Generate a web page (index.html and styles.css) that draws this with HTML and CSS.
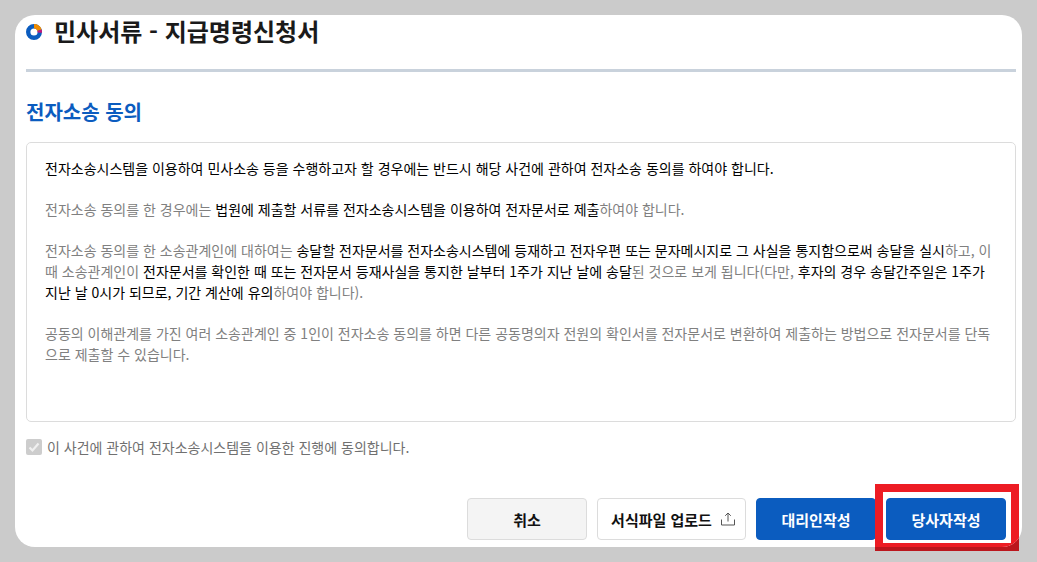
FILE: index.html
```html
<!DOCTYPE html>
<html lang="ko">
<head>
<meta charset="utf-8">
<title>민사서류 - 지급명령신청서</title>
<link rel="stylesheet" href="styles.css">
</head>
<body>
<div class="mark-under"></div>
<main class="card">
  <header class="head">
    <svg class="logo" viewBox="0 0 16 16" width="16" height="16" aria-hidden="true">
      <circle cx="8" cy="8" r="5.8" fill="none" stroke="#0b5cbf" stroke-width="4.4"/>
      <path d="M8 2.2A5.8 5.8 0 0 1 13.5 6.2" fill="none" stroke="#f08c00" stroke-width="4.4"/>
      <path d="M13.5 6.2A5.8 5.8 0 0 1 13.8 8.6" fill="none" stroke="#c2187a" stroke-width="4.4"/>
    </svg>
    <h1 class="title">민사서류 - 지급명령신청서</h1>
  </header>
  <hr class="rule">
  <h2 class="section">전자소송 동의</h2>
  <section class="terms">
    <p class="dark">전자소송시스템을 이용하여 민사소송 등을 수행하고자 할 경우에는 반드시 해당 사건에 관하여 전자소송 동의를 하여야 합니다.</p>
    <p>전자소송 동의를 한 경우에는 <b>법원에 제출할 서류를 전자소송시스템을 이용하여 전자문서로 제출</b>하여야 합니다.</p>
    <p>전자소송 동의를 한 소송관계인에 대하여는 <b>송달할 전자문서를 전자소송시스템에 등재하고 전자우편 또는 문자메시지로 그 사실을 통지함으로써 송달을 실시</b>하고, 이때 소송관계인이 <b>전자문서를 확인한 때 또는 전자문서 등재사실을 통지한 날부터 1주가 지난 날에 송달</b>된 것으로 보게 됩니다(다만, <b>후자의 경우 송달간주일은 1주가 지난 날 0시가 되므로, 기간 계산에 유의</b>하여야 합니다).</p>
    <p>공동의 이해관계를 가진 여러 소송관계인 중 1인이 전자소송 동의를 하면 다른 공동명의자 전원의 확인서를 전자문서로 변환하여 제출하는 방법으로 전자문서를 단독으로 제출할 수 있습니다.</p>
  </section>
  <label class="agree">
    <span class="check"><svg viewBox="0 0 16 16" width="16" height="16" aria-hidden="true"><path d="M3.5 8.5l3 3 6-7" fill="none" stroke="#f0f0f0" stroke-width="2.2"/></svg></span>
    <span>이 사건에 관하여 전자소송시스템을 이용한 진행에 동의합니다.</span>
  </label>
  <footer class="actions">
    <button class="btn btn-gray">취소</button>
    <button class="btn btn-line">서식파일 업로드
      <svg viewBox="0 0 16 16" width="16" height="16" aria-hidden="true"><path d="M8 10.5V2M5.2 4.8L8 2l2.8 2.8M1.5 8.5v5.5h13V8.5" fill="none" stroke="#555" stroke-width="1"/></svg>
    </button>
    <button class="btn btn-blue">대리인작성</button>
    <button class="btn btn-blue btn-mark">당사자작성</button>
  </footer>
  <div class="mark-over"></div>
</main>
</body>
</html>
```
FILE: styles.css
```css
* { box-sizing: border-box; }
html, body { margin: 0; height: 100%; }
body {
  background: #cbcbcb;
  padding: 15px;
  font-family: "Noto Sans CJK KR", "Noto Sans", sans-serif;
  overflow: hidden;
  position: relative;
}
.card {
  width: 1007px;
  height: 532px;
  background: #fff;
  border-radius: 20px;
  padding: 0 6px 0 11px;
  display: flex;
  flex-direction: column;
  position: relative;
  overflow: hidden;
}
.head { display: flex; align-items: center; gap: 12px; height: 34px; flex: none; }
.logo { flex: none; }
.title { margin: -2px 0 0; font-size: 24px; font-weight: 700; line-height: 30px; color: #1a1a1a; }
.rule { margin: 20px 0 0; border: 0; height: 3px; background: #c9d2dc; flex: none; }
.section { margin: 27px 0 0; font-size: 20px; line-height: 26px; font-weight: 700; color: #0b5cbf; }
.terms {
  margin-top: 17px;
  height: 280px;
  flex: none;
  border: 1px solid #dcdcdc;
  border-radius: 5px;
  padding: 15px 18px;
  font-size: 14px;
  line-height: 21px;
  color: #808080;
}
.terms p { margin: 0 0 20px; }
.terms b, .dark { font-weight: 400; color: #000; }
.agree { display: flex; align-items: center; gap: 5px; margin-top: 15px; font-size: 14px; line-height: 20px; color: #707070; }
.check { width: 16px; height: 16px; border-radius: 2px; background: #cdcdcd; display: block; }
.check svg { display: block; }
.actions { position: absolute; left: 452px; top: 483px; display: flex; gap: 10px; }
.btn {
  height: 42px;
  width: 120px;
  border-radius: 4px;
  font-family: inherit;
  font-size: 15px;
  font-weight: 700;
  display: flex;
  align-items: center;
  justify-content: center;
  gap: 8px;
  padding: 0;
  border: 1px solid #dcdcdc;
  color: #111;
}
.btn-gray { background: #f4f4f4; }
.btn-line { background: #fff; width: 149px; padding-left: 4px; }
.btn-blue { background: #0b5cbf; border-color: #0b5cbf; color: #fff; }
.mark-under, .mark-over {
  position: absolute;
  width: 144px;
  height: 67px;
  border-style: solid;
  border-width: 8px;
}
.mark-under { left: 875px; top: 484px; border-color: #bb161d; }
.mark-over { left: 860px; top: 469px; border-color: #ed1c24; }
```
